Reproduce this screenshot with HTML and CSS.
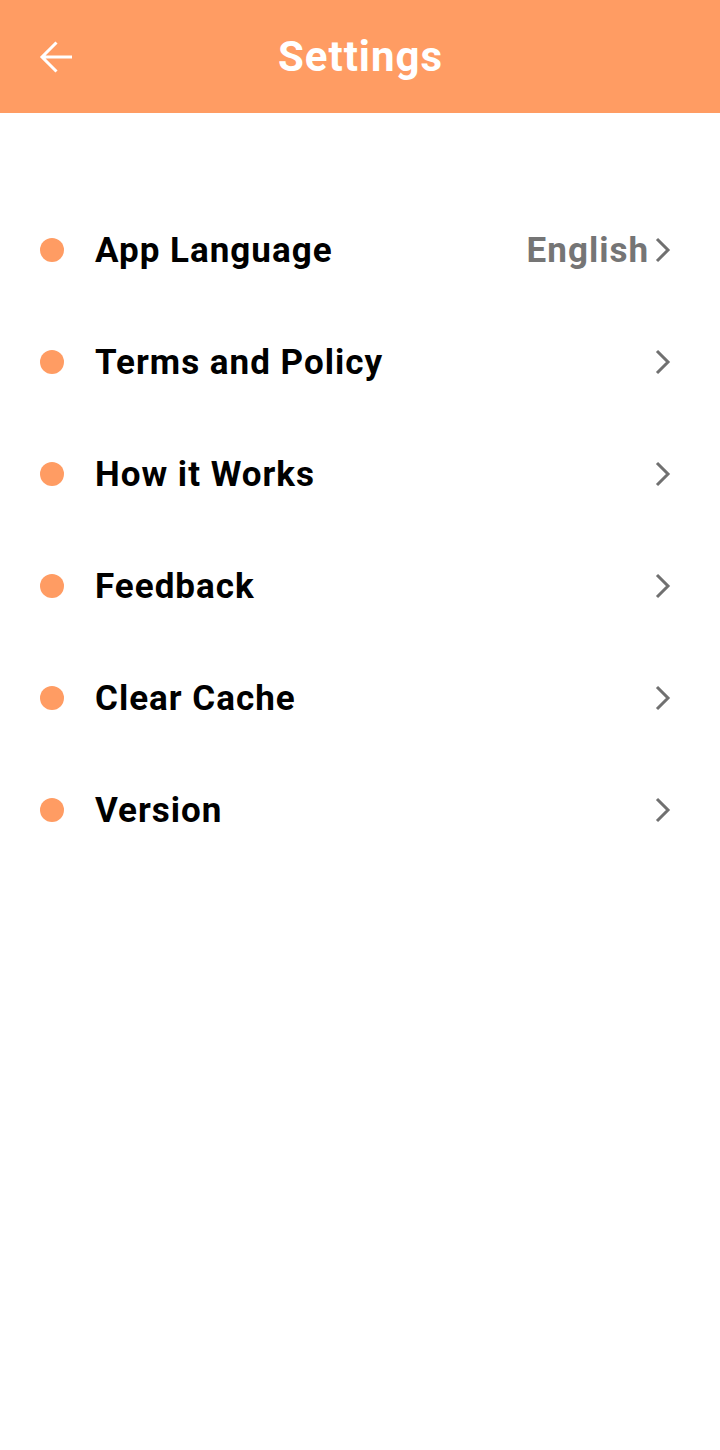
FILE: index.html
```html
<!DOCTYPE html>
<html>
<head>
<meta charset="utf-8">
<link rel="stylesheet" href="styles.css">
</head>
<body>
<header class="topbar">
  <button class="back" aria-label="Back">
    <svg width="36" height="36" viewBox="0 0 36 36"><path d="M34 18H5M18.5 3.5L4 18L18.5 32.5" fill="none" stroke="#fff" stroke-width="3"/></svg>
  </button>
  <h1 class="title">Settings</h1>
</header>
<main class="list">
  <div class="row"><span class="dot"></span><span class="label">App Language</span><span class="value">English</span><svg class="chev" width="20" height="28" viewBox="0 0 20 28"><path d="M3 3L14 14L3 25" fill="none" stroke="#707070" stroke-width="3"/></svg></div>
  <div class="row"><span class="dot"></span><span class="label">Terms and Policy</span><svg class="chev" width="20" height="28" viewBox="0 0 20 28"><path d="M3 3L14 14L3 25" fill="none" stroke="#707070" stroke-width="3"/></svg></div>
  <div class="row"><span class="dot"></span><span class="label">How it Works</span><svg class="chev" width="20" height="28" viewBox="0 0 20 28"><path d="M3 3L14 14L3 25" fill="none" stroke="#707070" stroke-width="3"/></svg></div>
  <div class="row"><span class="dot"></span><span class="label">Feedback</span><svg class="chev" width="20" height="28" viewBox="0 0 20 28"><path d="M3 3L14 14L3 25" fill="none" stroke="#707070" stroke-width="3"/></svg></div>
  <div class="row"><span class="dot"></span><span class="label">Clear Cache</span><svg class="chev" width="20" height="28" viewBox="0 0 20 28"><path d="M3 3L14 14L3 25" fill="none" stroke="#707070" stroke-width="3"/></svg></div>
  <div class="row"><span class="dot"></span><span class="label">Version</span><svg class="chev" width="20" height="28" viewBox="0 0 20 28"><path d="M3 3L14 14L3 25" fill="none" stroke="#707070" stroke-width="3"/></svg></div>
</main>
</body>
</html>
```
FILE: styles.css
```css
* { box-sizing: border-box; }
html, body { margin: 0; padding: 0; background: #fff; }
body { font-family: Roboto, "Noto Sans", sans-serif; width: 720px; min-height: 1450px; }
.topbar {
  height: 113px;
  background: #FF9C63;
  display: flex;
  align-items: center;
  justify-content: center;
  position: relative;
}
.back {
  position: absolute;
  left: 38px;
  top: 39px;
  padding: 0;
  border: 0;
  background: none;
  width: 36px;
  height: 36px;
  display: flex;
}
.title {
  margin: 0;
  color: #fff;
  font-size: 42px;
  font-weight: 700;
  letter-spacing: 1px;
  line-height: 1;
  padding-left: 1px;
  padding-top: 1px;
}
.list { padding-top: 81px; }
.row {
  height: 112px;
  display: flex;
  align-items: center;
  padding: 0 46px 0 40px;
}
.dot {
  width: 24px;
  height: 24px;
  border-radius: 50%;
  background: #FF9C63;
  flex: none;
}
.label {
  margin-left: 31px;
  font-size: 35px;
  font-weight: 700;
  letter-spacing: 1px;
  color: #000;
  flex: 1;
}
.value {
  font-size: 35px;
  font-weight: 700;
  letter-spacing: 1px;
  color: #757575;
  margin-right: 5px;
}
.chev { flex: none; }
```
